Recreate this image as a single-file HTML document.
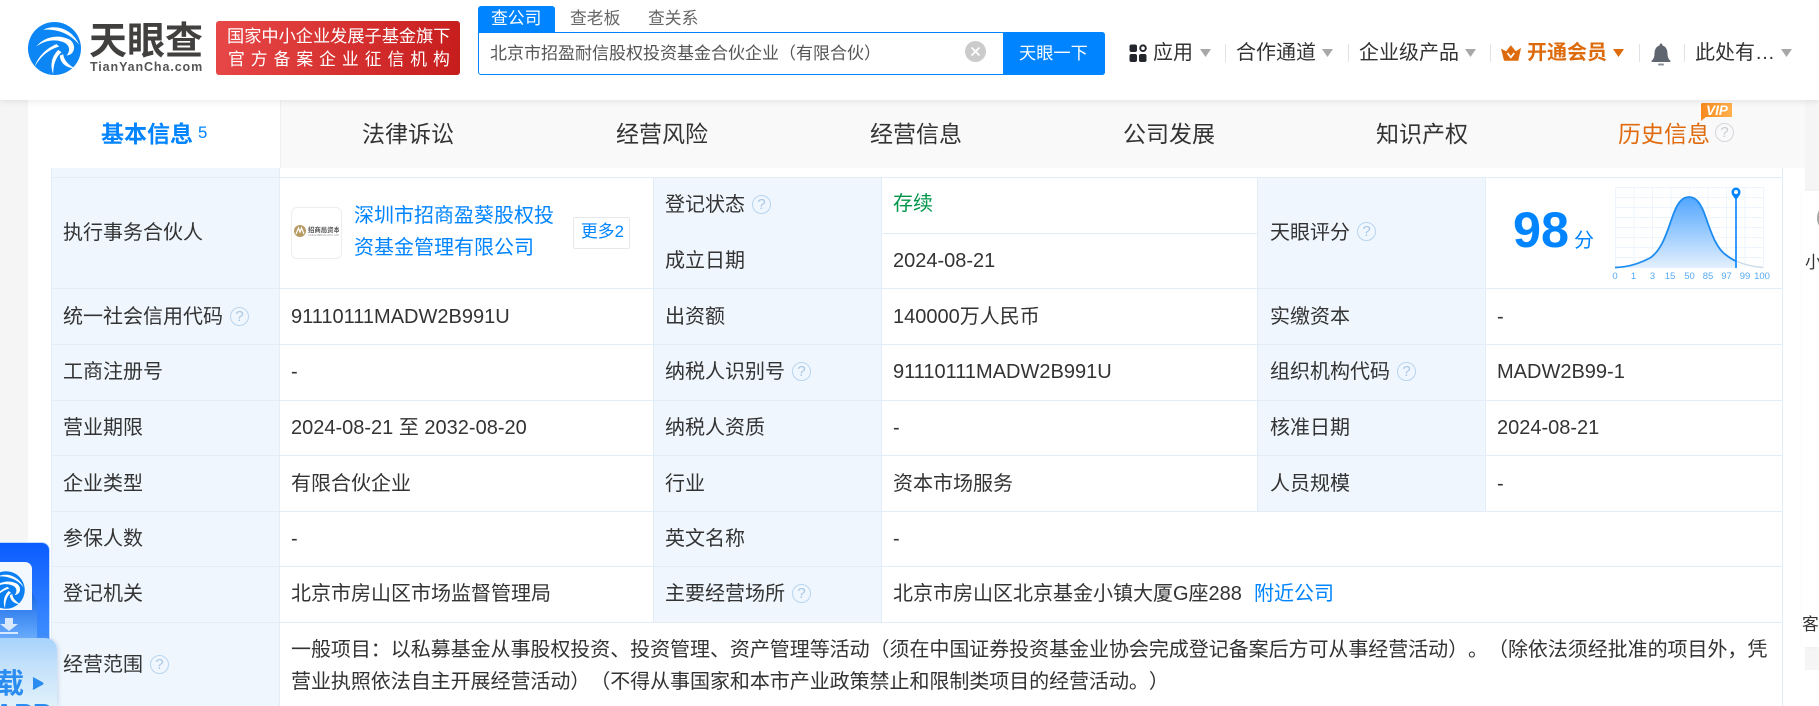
<!DOCTYPE html>
<html lang="zh-CN">
<head>
<meta charset="utf-8">
<title>北京市招盈耐信股权投资基金合伙企业（有限合伙）</title>
<style>
html,body{margin:0;padding:0;}
body{width:1819px;height:706px;overflow:hidden;position:relative;background:#f5f5f5;font-family:"Liberation Sans","Noto Sans CJK SC",sans-serif;color:#333;text-spacing-trim:space-all;font-feature-settings:"chws" 0,"palt" 0,"halt" 0;}
div,span,svg{position:absolute;}
.t{white-space:nowrap;line-height:24px;font-size:20px;height:24px;}
.b{background:#eff6fd;}
.h{height:1px;background:#e3edf7;}
.v{width:1px;background:#e3edf7;}
.tab{white-space:nowrap;font-size:23px;line-height:30px;top:119px;color:#333;}
.nav{white-space:nowrap;font-size:20px;line-height:26px;top:40px;color:#333;}
.sep{width:1px;height:18px;top:44px;background:#dfe3e8;}
.q{width:17px;height:17px;border:1.5px solid #b9d5ef;border-radius:50%;font-size:15px;line-height:17px;text-align:center;color:#a9c7e4;}
</style>
</head>
<body>
<!-- content panel -->
<div style="left:28px;top:100px;width:1777px;height:606px;background:#fff;"></div>
<div style="left:28px;top:100px;width:1777px;height:68px;background:#f9f9f9;"></div>
<div style="left:28px;top:100px;width:252px;height:68px;background:#fff;"></div>
<div style="left:280px;top:100px;width:1px;height:68px;background:#f0f0f0;"></div>

<!-- tabs -->
<span class="tab" style="left:101px;color:#0084ff;font-weight:bold;">基本信息</span>
<span style="left:198px;top:123px;font-size:16.8px;line-height:20px;color:#0084ff;">5</span>
<span class="tab" style="left:362px;">法律诉讼</span>
<span class="tab" style="left:616px;">经营风险</span>
<span class="tab" style="left:870px;">经营信息</span>
<span class="tab" style="left:1123px;">公司发展</span>
<span class="tab" style="left:1376px;">知识产权</span>
<span class="tab" style="left:1618px;color:#e06b0e;">历史信息</span>
<div class="q" style="left:1715px;top:123px;border-color:#d3d8dd;color:#c8ced4;">?</div>
<svg style="left:1700px;top:102px;" width="34" height="19" viewBox="0 0 34 19">
<defs><linearGradient id="vg" x1="0" y1="0" x2="1" y2="0"><stop offset="0" stop-color="#f98a1d"/><stop offset="1" stop-color="#ffb14d"/></linearGradient></defs>
<path d="M2 1H32V15H6L1 19V2Z" fill="url(#vg)"/>
<text x="17" y="13" text-anchor="middle" font-family="Liberation Sans" font-size="13.500" font-weight="bold" font-style="italic" fill="#fff">VIP</text>
</svg>

<!-- table backgrounds -->
<div class="b" style="left:52px;top:168px;width:227px;height:538px;"></div>
<div class="b" style="left:653px;top:177px;width:228px;height:446px;"></div>
<div class="b" style="left:1257px;top:177px;width:228px;height:334px;"></div>
<!-- horizontal lines -->
<div class="h" style="left:52px;top:177px;width:1730px;"></div>
<div class="h" style="left:881px;top:233px;width:376px;"></div>
<div class="h" style="left:52px;top:288px;width:1730px;"></div>
<div class="h" style="left:52px;top:344px;width:1730px;"></div>
<div class="h" style="left:52px;top:400px;width:1730px;"></div>
<div class="h" style="left:52px;top:455px;width:1730px;"></div>
<div class="h" style="left:52px;top:511px;width:1730px;"></div>
<div class="h" style="left:52px;top:566px;width:1730px;"></div>
<div class="h" style="left:52px;top:622px;width:1730px;"></div>
<!-- vertical lines -->
<div class="v" style="left:51px;top:168px;height:538px;"></div>
<div class="v" style="left:279px;top:168px;height:538px;"></div>
<div class="v" style="left:653px;top:177px;height:446px;"></div>
<div class="v" style="left:881px;top:177px;height:446px;"></div>
<div class="v" style="left:1257px;top:177px;height:334px;"></div>
<div class="v" style="left:1485px;top:177px;height:334px;"></div>
<div class="v" style="left:1782px;top:168px;height:538px;"></div>

<!-- col 1 labels -->
<span class="t" style="left:63px;top:221px;">执行事务合伙人</span>
<span class="t" style="left:63px;top:305px;">统一社会信用代码</span>
<div class="q" style="left:230px;top:307px;">?</div>
<span class="t" style="left:63px;top:360px;">工商注册号</span>
<span class="t" style="left:63px;top:416px;">营业期限</span>
<span class="t" style="left:63px;top:472px;">企业类型</span>
<span class="t" style="left:63px;top:527px;">参保人数</span>
<span class="t" style="left:63px;top:582px;">登记机关</span>
<span class="t" style="left:63px;top:653px;">经营范围</span>
<div class="q" style="left:150px;top:655px;">?</div>

<!-- col 2 values -->
<div style="left:291px;top:207px;width:49px;height:50px;border:1px solid #eee;border-radius:6px;background:#fff;"></div>
<svg style="left:293px;top:224px;" width="46" height="14" viewBox="0 0 46 14">
<circle cx="7" cy="7" r="6" fill="#b79b63"/><path d="M3 10L5.500 4L7 8L8.500 4L11 10" fill="none" stroke="#fff" stroke-width="1.200"/>
<text x="15" y="8" font-family="Noto Sans CJK SC" font-size="6.400" font-weight="bold" fill="#555">招商局资本</text>
<text x="15" y="12" font-family="Liberation Sans" font-size="2.600" fill="#999">CHINA MERCHANTS CAPITAL</text>
</svg>
<span class="t" style="left:354px;top:204px;color:#0084ff;">深圳市招商盈葵股权投</span>
<span class="t" style="left:354px;top:236px;color:#0084ff;">资基金管理有限公司</span>
<div style="left:573px;top:217px;width:55px;height:30px;border:1px solid #e6e8eb;border-radius:2px;"></div>
<span class="t" style="left:581px;top:220px;font-size:16.8px;color:#0084ff;">更多2</span>
<span class="t" style="left:291px;top:305px;">91110111MADW2B991U</span>
<span class="t" style="left:291px;top:360px;">-</span>
<span class="t" style="left:291px;top:416px;">2024-08-21 至 2032-08-20</span>
<span class="t" style="left:291px;top:472px;">有限合伙企业</span>
<span class="t" style="left:291px;top:527px;">-</span>
<span class="t" style="left:291px;top:582px;">北京市房山区市场监督管理局</span>
<span class="t" style="left:291px;top:638px;letter-spacing:-.05px;">一般项目：以私募基金从事股权投资、投资管理、资产管理等活动（须在中国证券投资基金业协会完成登记备案后方可从事经营活动）。（除依法须经批准的项目外，凭</span>
<span class="t" style="left:291px;top:670px;letter-spacing:-.05px;">营业执照依法自主开展经营活动）（不得从事国家和本市产业政策禁止和限制类项目的经营活动。）</span>

<!-- col 3 labels -->
<span class="t" style="left:665px;top:193px;">登记状态</span>
<div class="q" style="left:752px;top:195px;">?</div>
<span class="t" style="left:665px;top:249px;">成立日期</span>
<span class="t" style="left:665px;top:305px;">出资额</span>
<span class="t" style="left:665px;top:360px;">纳税人识别号</span>
<div class="q" style="left:792px;top:362px;">?</div>
<span class="t" style="left:665px;top:416px;">纳税人资质</span>
<span class="t" style="left:665px;top:472px;">行业</span>
<span class="t" style="left:665px;top:527px;">英文名称</span>
<span class="t" style="left:665px;top:582px;">主要经营场所</span>
<div class="q" style="left:792px;top:584px;">?</div>

<!-- col 4 values -->
<span class="t" style="left:893px;top:192px;color:#00964a;">存续</span>
<span class="t" style="left:893px;top:249px;">2024-08-21</span>
<span class="t" style="left:893px;top:305px;">140000万人民币</span>
<span class="t" style="left:893px;top:360px;">91110111MADW2B991U</span>
<span class="t" style="left:893px;top:416px;">-</span>
<span class="t" style="left:893px;top:472px;">资本市场服务</span>
<span class="t" style="left:893px;top:527px;">-</span>
<span class="t" style="left:893px;top:582px;">北京市房山区北京基金小镇大厦G座288</span>
<span class="t" style="left:1254px;top:582px;color:#0084ff;">附近公司</span>

<!-- col 5 labels -->
<span class="t" style="left:1270px;top:221px;">天眼评分</span>
<div class="q" style="left:1357px;top:222px;">?</div>
<span class="t" style="left:1270px;top:305px;">实缴资本</span>
<span class="t" style="left:1270px;top:360px;">组织机构代码</span>
<div class="q" style="left:1397px;top:362px;">?</div>
<span class="t" style="left:1270px;top:416px;">核准日期</span>
<span class="t" style="left:1270px;top:472px;">人员规模</span>

<!-- col 6 values -->
<span class="t" style="left:1497px;top:305px;">-</span>
<span class="t" style="left:1497px;top:360px;">MADW2B99-1</span>
<span class="t" style="left:1497px;top:416px;">2024-08-21</span>
<span class="t" style="left:1497px;top:472px;">-</span>

<!-- score -->
<span style="left:1513px;top:202px;font-size:50.4px;font-weight:bold;line-height:56px;color:#0084ff;white-space:nowrap;">98</span>
<span class="t" style="left:1574px;top:229px;color:#0084ff;">分</span>
<svg style="left:0;top:0;" width="1819" height="706" viewBox="0 0 1819 706">
<defs><linearGradient id="cg" x1="0" y1="0" x2="0" y2="1"><stop offset="0" stop-color="#52a6ff"/><stop offset="1" stop-color="#e3f0fd"/></linearGradient></defs>
<g stroke="#eef4fb" stroke-width="1" fill="none">
<path d="M1615.500 187V268M1634 187V268M1652.500 187V268M1671 187V268M1689.500 187V268M1708 187V268M1726.500 187V268M1745 187V268M1763.500 187V268"/>
<path d="M1615 187.500H1763M1615 197.500H1763M1615 207.500H1763M1615 217.500H1763M1615 227.500H1763M1615 237.500H1763M1615 247.500H1763M1615 257.500H1763"/>
</g>
<path d="M1615 267.500C1630 267 1640 263 1650 258C1662 250 1667 232 1672 218C1677 203 1682 197 1689 197C1696 197 1701 203 1706 218C1711 232 1716 248 1726 255C1730 258 1733 260 1736 261V268H1615Z" fill="url(#cg)"/>
<path d="M1736 261C1745 265 1755 267 1763 267.500" fill="none" stroke="#ccd9e6" stroke-width="1.500"/>
<path d="M1615 267.500C1630 267 1640 263 1650 258C1662 250 1667 232 1672 218C1677 203 1682 197 1689 197C1696 197 1701 203 1706 218C1711 232 1716 248 1726 255C1730 258 1733 260 1736 261" fill="none" stroke="#1d8cf0" stroke-width="1.800"/>
<path d="M1736 198V268" stroke="#0084ff" stroke-width="1.600"/>
<path d="M1736 200C1733 196 1731.500 194.500 1731.500 192A4.500 4.500 0 0 1 1740.500 192C1740.500 194.500 1739 196 1736 200Z" fill="#0084ff"/>
<circle cx="1736" cy="192" r="2" fill="#fff"/>
<g font-family="Liberation Sans" font-size="9.500" fill="#55a9f5" text-anchor="middle">
<text x="1615" y="279">0</text><text x="1633.500" y="279">1</text><text x="1652.500" y="279">3</text><text x="1670" y="279">15</text><text x="1689.500" y="279">50</text><text x="1708" y="279">85</text><text x="1726.500" y="279">97</text><text x="1745" y="279">99</text><text x="1762" y="279">100</text>
</g>
</svg>

<!-- right floating cards -->
<div style="left:1802px;top:191px;width:17px;height:456px;background:#fff;border-radius:4px 0 0 4px;box-shadow:0 0 4px rgba(0,0,0,.04);overflow:hidden;">
<div style="left:15px;top:12px;width:30px;height:30px;border-radius:50%;background:#fff;border:3px solid #a5a5a5;box-sizing:border-box;"></div>
<span class="t" style="left:3px;top:60px;font-size:16.8px;">小</span>
<span class="t" style="left:0;top:422px;font-size:16.8px;">客</span>
</div>
<div style="left:1802px;top:670px;width:17px;height:36px;background:#fff;border-radius:4px 0 0 0;"></div>

<!-- left floating widget -->
<div style="left:0;top:543px;width:49px;height:120px;background:linear-gradient(180deg,#0a5cff,#4d9bff);border-radius:0 7px 0 0;box-shadow:0 0 0 1px #bcd8ff;"></div>
<svg style="left:0;top:592px;" width="40" height="50" viewBox="0 0 40 50">
<defs><linearGradient id="pk" x1="0" y1="0" x2="0" y2="1"><stop offset="0" stop-color="#1767e6"/><stop offset="1" stop-color="#6fb2ff"/></linearGradient></defs>
<path d="M0 10H32V0L37 10V50H0Z" fill="url(#pk)"/>
</svg>
<div style="left:0;top:562px;width:32px;height:48px;background:#f3f8ff;border-radius:0 7px 0 0;"></div>
<svg style="left:-13px;top:571px;" width="38" height="38" viewBox="25 22 158 158">
<circle cx="104" cy="101" r="78" fill="#0c7ff2"/>
<path d="M70 45C105 28 155 40 178 90C150 55 110 42 70 45Z" fill="#fff"/>
<path d="M50 95C70 70 110 55 150 75C170 90 165 120 140 122C152 108 150 90 130 82C100 70 70 80 50 95Z" fill="#fff"/>
<path d="M110 88C80 100 55 125 45 155C62 125 85 105 118 95Z" fill="#fff"/>
<path d="M115 105C95 125 90 150 100 178C100 150 108 125 125 112Z" fill="#fff"/>
<path d="M120 122C120 140 135 160 165 160C145 150 132 135 130 118Z" fill="#fff"/>
</svg>
<svg style="left:0;top:618px;" width="18" height="16" viewBox="0 0 18 16">
<path d="M5 0H13V6H18L9 13L0 6H5ZM0 14H18V16H0Z" fill="#d8e9ff"/>
</svg>
<div style="left:0;top:638px;width:57px;height:68px;background:linear-gradient(180deg,#a6d2fb 0%,#c3e1fb 40%,#e0f1f9 100%);border-radius:0 12px 0 0;box-shadow:1px 0 4px rgba(120,150,200,.35);overflow:hidden;">
<span style="left:-4px;top:29px;font-size:28px;line-height:34px;font-weight:bold;color:#2a8cf0;white-space:nowrap;">载</span>
<span style="left:-6px;top:60px;font-size:28px;line-height:32px;font-weight:bold;color:#2a8cf0;white-space:nowrap;">APP</span>
<svg style="left:32px;top:39px;" width="12" height="13" viewBox="0 0 12 13"><path d="M1 1.500Q0 0 2 .5L11 5.500Q12 6.500 11 7.500L2 12.500Q0 13 1 11Z" fill="#2a8cf0"/></svg>
</div>

<!-- header -->
<div style="left:0;top:0;width:1819px;height:100px;background:#fff;box-shadow:0 2px 6px rgba(0,0,0,.08);"></div>
<svg style="left:28px;top:22px;" width="53" height="53" viewBox="25 22 158 158">
<circle cx="104" cy="101" r="79" fill="#0c86f5"/>
<path d="M70 45C105 28 155 40 178 90C150 55 110 42 70 45Z" fill="#fff"/>
<path d="M50 95C70 70 110 55 150 75C170 90 165 120 140 122C152 108 150 90 130 82C100 70 70 80 50 95Z" fill="#fff"/>
<path d="M110 88C80 100 55 125 45 155C62 125 85 105 118 95Z" fill="#fff"/>
<path d="M115 105C95 125 90 150 100 178C100 150 108 125 125 112Z" fill="#fff"/>
<path d="M120 122C120 140 135 160 165 160C145 150 132 135 130 118Z" fill="#fff"/>
</svg>
<span style="left:89px;top:20px;font-size:38px;line-height:44px;font-weight:bold;color:#423f3f;white-space:nowrap;">天眼查</span>
<span style="left:90px;top:59px;font-size:12.500px;line-height:16px;font-weight:bold;color:#555;letter-spacing:.9px;white-space:nowrap;">TianYanCha.com</span>

<div style="left:216px;top:21px;width:244px;height:54px;border-radius:3px;background:linear-gradient(100deg,#e84848,#c61c1c);"></div>
<span style="left:227px;top:24px;font-size:17.200px;line-height:24px;color:#fff;white-space:nowrap;">国家中小企业发展子基金旗下</span>
<span style="left:228px;top:48px;font-size:16.800px;line-height:24px;color:#fff;letter-spacing:6px;white-space:nowrap;">官方备案企业征信机构</span>

<div style="left:478px;top:6px;width:77px;height:27px;background:#0084ff;border-radius:3px 3px 0 0;"></div>
<span style="left:491px;top:6px;font-size:16.800px;line-height:25px;color:#fff;white-space:nowrap;">查公司</span>
<span style="left:570px;top:6px;font-size:16.800px;line-height:25px;color:#666;white-space:nowrap;">查老板</span>
<span style="left:648px;top:6px;font-size:16.800px;line-height:25px;color:#666;white-space:nowrap;">查关系</span>

<div style="left:478px;top:32px;width:627px;height:43px;box-sizing:border-box;border:1.500px solid #0084ff;border-radius:0 3px 3px 3px;background:#fff;"></div>
<div style="left:1003px;top:32px;width:102px;height:43px;background:#0084ff;border-radius:0 3px 3px 0;"></div>
<span style="left:490px;top:42px;font-size:17px;line-height:24px;color:#555;white-space:nowrap;">北京市招盈耐信股权投资基金合伙企业（有限合伙）</span>
<svg style="left:965px;top:41px;" width="21" height="21" viewBox="0 0 21 21"><circle cx="10.500" cy="10.500" r="10.500" fill="#cbcbcb"/><path d="M6.500 6.500L14.500 14.500M14.500 6.500L6.500 14.500" stroke="#fff" stroke-width="1.800"/></svg>
<span style="left:1019px;top:41px;font-size:17.200px;line-height:24px;color:#fff;white-space:nowrap;">天眼一下</span>

<!-- nav -->
<svg style="left:1129px;top:44px;" width="19" height="19" viewBox="0 0 19 19">
<rect x="0.500" y="0.500" width="7.500" height="7.500" rx="2" fill="#23272d"/>
<circle cx="14" cy="4.200" r="2.800" fill="none" stroke="#23272d" stroke-width="2"/>
<rect x="0.500" y="10" width="7.500" height="8" rx="2" fill="#23272d"/>
<rect x="10" y="10" width="7.500" height="8" rx="2" fill="#23272d"/>
</svg>
<span class="nav" style="left:1153px;">应用</span>
<svg style="left:1200px;top:49px;" width="11" height="8" viewBox="0 0 11 8"><path d="M0 0H11L5.500 8Z" fill="#a8a8a8"/></svg>
<div class="sep" style="left:1225px;"></div>
<span class="nav" style="left:1236px;">合作通道</span>
<svg style="left:1322px;top:49px;" width="11" height="8" viewBox="0 0 11 8"><path d="M0 0H11L5.500 8Z" fill="#a8a8a8"/></svg>
<div class="sep" style="left:1348px;"></div>
<span class="nav" style="left:1359px;">企业级产品</span>
<svg style="left:1465px;top:49px;" width="11" height="8" viewBox="0 0 11 8"><path d="M0 0H11L5.500 8Z" fill="#a8a8a8"/></svg>
<div class="sep" style="left:1490px;"></div>
<svg style="left:1501px;top:45px;" width="20" height="16" viewBox="33 32 59 46">
<path d="M33 42L48 50L62 32L77 50L92 40L84 78H42Z" fill="#dd6b0c"/>
<path d="M52 55L62 68L72 55" fill="none" stroke="#fff" stroke-width="5"/>
</svg>
<span class="nav" style="left:1527px;font-weight:bold;color:#dd6b0c;">开通会员</span>
<svg style="left:1613px;top:49px;" width="11" height="8" viewBox="0 0 11 8"><path d="M0 0H11L5.500 8Z" fill="#dd6b0c"/></svg>
<div class="sep" style="left:1639px;"></div>
<svg style="left:1651px;top:43px;" width="20" height="23" viewBox="0 0 20 23">
<path d="M10 0.500C11 0.500 11.500 1.500 11.500 2.500C15 3.500 16.500 7 16.500 10.500C16.500 14 17.500 16 19.500 18V19H0.500V18C2.500 16 3.500 14 3.500 10.500C3.500 7 5 3.500 8.500 2.500C8.500 1.500 9 .5 10 .5Z" fill="#5f6670"/>
<rect x="7" y="20.500" width="6" height="2" rx="1" fill="#8a9099"/>
</svg>
<div class="sep" style="left:1684px;"></div>
<span class="nav" style="left:1695px;">此处有…</span>
<svg style="left:1781px;top:49px;" width="11" height="8" viewBox="0 0 11 8"><path d="M0 0H11L5.500 8Z" fill="#a8a8a8"/></svg>
</body>
</html>
